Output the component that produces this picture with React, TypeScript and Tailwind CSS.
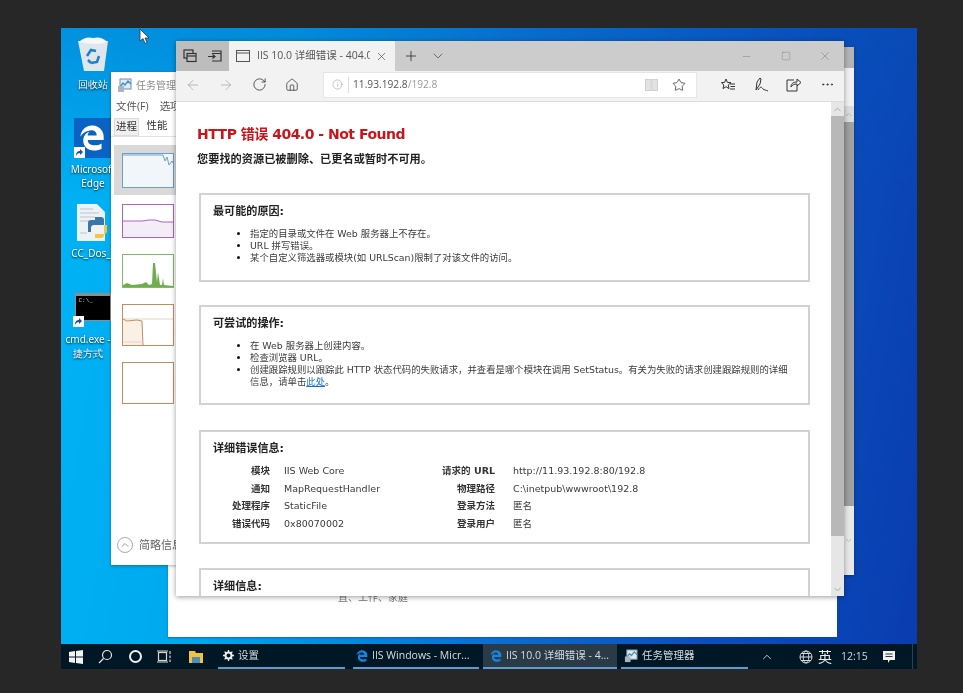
import React from 'react';
import { ArrowLeft, ArrowRight, RotateCw, Home, Info, Star, Plus, ChevronDown, ChevronUp, X, Minus, Square, MoreHorizontal } from 'lucide-react';
import { FaEdgeLegacy } from 'react-icons/fa6';

const cjk = { fontFamily: '"DejaVu Sans", "Noto Sans CJK SC", sans-serif' };
const ui = { fontFamily: '"Open Sans", "Noto Sans CJK SC", sans-serif' };

const DesktopLabel = ({ lines }: { lines: string[] }) => (
  <div className="text-center text-[10px] leading-[14px] text-white [text-shadow:0_1px_2px_rgba(0,0,0,0.9)] whitespace-nowrap">
    {lines.map(l => <div key={l}>{l}</div>)}
  </div>
);

const Shortcut = ({ className }: { className: string }) => (
  <div className={`absolute w-[11px] h-[11px] bg-white flex items-center justify-center ${className}`}>
    <svg width="9" height="9" viewBox="0 0 9 9"><path d="M1 8 C1 4 3 3 5 3 V1 L8 4 L5 7 V5 C3 5 2 6 1 8Z" fill="#1d4f9c" /></svg>
  </div>
);

const DesktopIcons = () => (
  <>
    <div className="absolute left-[12px] top-[8px] w-[40px] flex flex-col items-center gap-[5px]">
      <svg width="32" height="36" viewBox="0 0 32 36">
        <path d="M1 5 L31 5 L27 35 L7 35Z" fill="#dfe6ec" />
        <path d="M2 6 Q8 0 16 2 Q25 0 30 6 Q20 10 2 6Z" fill="#f5f7f9" />
        <path d="M10 20 L14 14 L19 15 M22 20 L20 26 L14 27 M11 24 L14 27" stroke="#1b7fd0" strokeWidth="2.5" fill="none" />
      </svg>
      <DesktopLabel lines={['回收站']} />
    </div>
    <div className="absolute left-[-4px] top-[90px] w-[72px] flex flex-col items-center">
      <div className="relative w-[37px] h-[40px] bg-[#0a63c4] flex items-center justify-center -ml-[2px]">
        <FaEdgeLegacy size={26} color="#ffffff" />
        <Shortcut className="bottom-0 left-0" />
      </div>
      <div className="mt-[4px]"><DesktopLabel lines={['Microsoft', 'Edge']} /></div>
    </div>
    <div className="absolute left-[14px] top-[175px] w-[40px]">
      <svg width="36" height="40" viewBox="0 0 36 40">
        <path d="M2 1 H22 L30 9 V38 H2Z" fill="#eef2f5" />
        <path d="M5 6 H18 M5 10 H24 M5 14 H20 M5 18 H14 M5 30 H12" stroke="#b9c5cf" strokeWidth="1" />
        <path d="M20 14 h6 a3 3 0 0 1 3 3 v5 h-10 a3 3 0 0 0 -3 3 v4 h-3 v-9 a3 3 0 0 1 3 -3 h4Z" fill="#3a76a8" />
        <path d="M29 22 h3 v6 a3 3 0 0 1 -3 3 h-9 v4 h6 a3 3 0 0 0 3 -3Z" fill="#f2c73f" />
      </svg>
      <div className="-ml-[8px] mt-[3px]"><DesktopLabel lines={['CC_Dos_']} /></div>
    </div>
    <div className="absolute left-[-9px] top-[265px] w-[72px] flex flex-col items-center">
      <div className="relative w-[36px] h-[28px] bg-black border border-t-[3px] border-[#8b8f93] ml-[9px] pl-[3px] text-[6px] leading-[10px] text-[#cfcfcf]" style={{ fontFamily: '"Liberation Mono", monospace' }}>
        C:\_
        <Shortcut className="bottom-[-7px] left-[-3px]" />
      </div>
      <div className="mt-[11px]"><DesktopLabel lines={['cmd.exe -', '捷方式']} /></div>
    </div>
  </>
);

const TaskManagerIcon = ({ size = 15 }: { size?: number }) => (
  <svg width={size} height={size} viewBox="0 0 15 15">
    <rect x="3" y="1" width="11" height="10" fill="#dfeaf3" stroke="#7b8d9c" />
    <path d="M3 9 L6 5 L8 7 L11 3 L14 6" stroke="#3d8fca" fill="none" strokeWidth="1.3" />
    <rect x="1" y="8" width="6" height="6" fill="#a9b4bd" />
  </svg>
);

const TaskManager = () => (
  <div className="absolute left-[50px] top-[44px] w-[90px] h-[493px] bg-white shadow-[0_1px_3px_rgba(0,0,0,0.3)] overflow-hidden whitespace-nowrap" style={ui}>
    <div className="h-[26px] flex items-center pl-[6px] gap-[4px] text-[10px] text-[#8a8a8a]">
      <TaskManagerIcon />
      <span>任务管理器</span>
    </div>
    <div className="h-[18px] flex items-center pl-[5px] gap-[11px] text-[10.5px] text-[#555]">
      <span>文件(F)</span><span>选项</span>
    </div>
    <div className="h-[21px] flex items-end border-b border-[#e2e2e2] pl-[3px] text-[10.5px] text-[#333]">
      <div className="w-[25px] h-[18px] bg-[#f0f0f0] border border-[#dcdcdc] flex items-center justify-center">进程</div>
      <div className="w-[36px] h-[20px] bg-white flex items-center justify-center">性能</div>
    </div>
    <div className="mt-[8px] ml-[3px] h-[50px] bg-[#d9d9d9] pt-[8px] pl-[8px]">
      <svg width="52" height="35" viewBox="0 0 52 35" className="block">
        <rect x="0.5" y="0.5" width="51" height="34" fill="#f1f6fb" stroke="#6ba0c7" />
        <path d="M1 2 H41 L43 8 L45 4 L47 12 L50 8 L51 10" stroke="#6ba0c7" fill="none" />
      </svg>
    </div>
    <div className="ml-[11px] mt-[9px] flex flex-col gap-[16px]">
      <svg width="52" height="34" viewBox="0 0 52 34" className="block">
        <rect x="0.5" y="0.5" width="51" height="33" fill="#fff" stroke="#ae63c2" />
        <path d="M1 17 H20 L27 16 H33 L40 18 H51 V33 H1Z" fill="#f3eef5" />
        <path d="M1 17 H20 L27 16 H33 L40 18 H51" stroke="#ae63c2" fill="none" />
      </svg>
      <svg width="52" height="34" viewBox="0 0 52 34" className="block">
        <rect x="0.5" y="0.5" width="51" height="33" fill="#fff" stroke="#82b866" />
        <path d="M1 31 L5 29 L10 31 L20 30 L24 28 L27 31 L30 30 L31 9 L33 9 L35 28 L36 18 L38 31 L40 31 L41 24 L42 31 L51 32 V33 H1Z" fill="#6fae4b" />
      </svg>
      <svg width="52" height="42" viewBox="0 0 52 42" className="block">
        <rect x="0.5" y="0.5" width="51" height="41" fill="#fff" stroke="#bf8f63" />
        <path d="M1 15 H51" stroke="#e7d3c2" />
        <path d="M1 15 L5 17 L15 16 L20 17 L21 41 H1Z" fill="#fbf0e6" />
        <path d="M1 15 L5 17 L15 16 L20 17 L21 41" stroke="#bf8f63" fill="none" />
        <path d="M1 38 H21" stroke="#e7d3c2" />
      </svg>
      <svg width="52" height="42" viewBox="0 0 52 42" className="block">
        <rect x="0.5" y="0.5" width="51" height="41" fill="#fff" stroke="#bf8f63" />
      </svg>
    </div>
    <div className="absolute left-[6px] bottom-[12px] flex items-center gap-[6px] text-[11px] text-[#666]">
      <div className="w-[16px] h-[16px] rounded-full border border-[#aaa] flex items-center justify-center text-[#999]">
        <ChevronUp size={12} />
      </div>
      <span>简略信息</span>
    </div>
  </div>
);

const TabIcons = () => (
  <div className="w-[53px] h-full flex items-center justify-around px-[2px] bg-[#bdbdbd] text-[#333]">
    <svg width="14" height="14" viewBox="0 0 14 14" fill="none" stroke="#333" strokeWidth="1.2">
      <rect x="1" y="1" width="9" height="8" /><rect x="4" y="4.5" width="9" height="8" fill="#bdbdbd" /><path d="M4 7 H13" />
    </svg>
    <svg width="15" height="12" viewBox="0 0 15 12" fill="none" stroke="#333" strokeWidth="1.2">
      <path d="M5 1 H14 V11 H5 M5 3.5 H14 M1 6.5 H8 M5.5 4.5 L8 6.5 L5.5 8.5" />
    </svg>
  </div>
);

const Toolbar = () => (
  <div className="h-[31px] shrink-0 bg-[#f2f2f2] border-b border-[#dcdcdc] flex items-center pb-[3px]">
    <div className="w-[147px] h-full flex items-center text-[#333]">
      <ArrowLeft size={16} strokeWidth={1.2} className="ml-[9px] text-[#aaa]" />
      <ArrowRight size={16} strokeWidth={1.2} className="ml-[17px] text-[#aaa]" />
      <RotateCw size={15} strokeWidth={1.3} className="ml-[18px]" />
      <Home size={14} strokeWidth={1.3} className="ml-[18px]" />
    </div>
    <div className="w-[374px] h-[26px] bg-white border border-[#e6e6e6] flex items-center text-[10.2px]" style={ui}>
      <Info size={11} strokeWidth={1.2} className="ml-[8px] text-[#999]" />
      <div className="w-px h-[16px] bg-[#ddd] ml-[5px] mr-[4px]" />
      <span className="text-[#555]">11.93.192.8</span><span className="text-[#9a9a9a]">/192.8</span>
      <svg width="13" height="12" viewBox="0 0 13 12" className="ml-auto" fill="#e3e3e3" stroke="#d0d0d0"><rect x="0.5" y="0.5" width="5.5" height="11" /><rect x="7" y="0.5" width="5.5" height="11" /></svg>
      <Star size={14} strokeWidth={1.3} className="ml-[14px] mr-[10px] text-[#333]" />
    </div>
    <div className="flex-1 flex items-center text-[#333]">
      <svg width="14" height="14" viewBox="0 0 14 14" fill="none" stroke="#333" className="ml-[24px]"><path d="M5 1 L6.4 4.4 L10 4.6 L7.2 7 L8 10.6 L5 8.7 L2 10.6 L2.8 7 L0.4 4.6 L3.6 4.4Z M9 6 H14 M9.5 8.5 H14 M9 11 H14" /></svg>
      <svg width="15" height="15" viewBox="0 0 15 15" fill="none" stroke="#333" className="ml-[19px]"><path d="M2 13 L3 5 L6 1 L7 2 L6 7 L2 13 M4 13 C7 8 8 11 9 12 C10 13 12 13 14 14" /></svg>
      <svg width="15" height="14" viewBox="0 0 15 14" fill="none" stroke="#333" className="ml-[17px]"><path d="M8 2 H1 V13 H11 V8 M5 9 C5 5 8 4 11 4 V1 L15 4.5 L11 8 V6 C8 6 6 7 5 9Z" /></svg>
      <MoreHorizontal size={15} strokeWidth={1.5} className="ml-[19px]" />
    </div>
  </div>
);

const Box = ({ title, className, children }: { title: string; className: string; children?: React.ReactNode }) => (
  <div className={`ml-[23px] mr-[21px] border-2 border-[#d2d2d2] pl-[12px] pt-[9px] ${className}`}>
    <div className="text-[11.1px] font-bold leading-[16px] text-[#222]">{title}</div>
    {children}
  </div>
);

const Bullets = ({ items }: { items: React.ReactNode[] }) => (
  <ul className="list-disc marker:text-[#111] ml-[37px] mt-[8px] text-[9.4px] leading-[12.1px] text-[#3a3a3a] whitespace-nowrap">
    {items.map((item, i) => <li key={i}>{item}</li>)}
  </ul>
);

const errorRows = [
  ['模块', 'IIS Web Core', '请求的 URL', 'http://11.93.192.8:80/192.8'],
  ['通知', 'MapRequestHandler', '物理路径', 'C:\\inetpub\\wwwroot\\192.8'],
  ['处理程序', 'StaticFile', '登录方法', '匿名'],
  ['错误代码', '0x80070002', '登录用户', '匿名'],
];

const PageBody = () => (
  <div className="flex-1 h-full overflow-hidden bg-white pt-[22px]" style={cjk}>
    <h1 className="ml-[21px] text-[14px] tracking-[-0.5px] leading-[20px] font-bold text-[#c8151b] whitespace-nowrap">HTTP 错误 404.0 - Not Found</h1>
    <p className="ml-[21px] mt-[9px] text-[11.2px] leading-[14px] font-bold text-[#222] whitespace-nowrap">您要找的资源已被删除、已更名或暂时不可用。</p>
    <Box title="最可能的原因:" className="mt-[26px] h-[89px]">
      <Bullets items={['指定的目录或文件在 Web 服务器上不存在。', 'URL 拼写错误。', '某个自定义筛选器或模块(如 URLScan)限制了对该文件的访问。']} />
    </Box>
    <Box title="可尝试的操作:" className="mt-[23px] h-[100px]">
      <Bullets items={[
        '在 Web 服务器上创建内容。',
        '检查浏览器 URL。',
        <>创建跟踪规则以跟踪此 HTTP 状态代码的失败请求，并查看是哪个模块在调用 SetStatus。有关为失败的请求创建跟踪规则的详细<br />信息，请单击<a className="text-[#1a6fd0] underline">此处</a>。</>,
      ]} />
    </Box>
    <Box title="详细错误信息:" className="mt-[25px] h-[114px]">
      <div className="mt-[5px] grid grid-cols-[57px_154px_71px_1fr] text-[9.5px] leading-[17.6px] text-[#3a3a3a] whitespace-nowrap">
        {errorRows.map(row => (
          <React.Fragment key={row[0]}>
            <div className="text-right font-bold text-[#333]">{row[0]}</div>
            <div className="pl-[14px]">{row[1]}</div>
            <div className="text-right font-bold text-[#333]">{row[2]}</div>
            <div className="pl-[18px]">{row[3]}</div>
          </React.Fragment>
        ))}
      </div>
    </Box>
    <Box title="详细信息:" className="mt-[24px] h-[60px]" />
  </div>
);

const Browser = () => (
  <div className="absolute left-[115px] top-[13px] w-[668px] h-[555px] flex flex-col bg-white shadow-[0_1px_5px_rgba(0,0,0,0.4)] overflow-hidden">
    <div className="h-[30px] shrink-0 bg-[#cccccc] flex items-center" style={ui}>
      <TabIcons />
      <div className="w-[166px] h-full bg-[#f2f2f2] flex items-center text-[10.5px] text-[#555] whitespace-nowrap">
        <svg width="14" height="12" viewBox="0 0 14 12" fill="none" stroke="#555" className="ml-[7px] shrink-0"><rect x="0.5" y="0.5" width="13" height="11" /><path d="M0.5 3 H13.5" /></svg>
        <span className="ml-[7px] w-[113px] overflow-hidden">IIS 10.0 详细错误 - 404.0</span>
        <X size={13} strokeWidth={1.2} className="ml-[5px] text-[#444] shrink-0" />
      </div>
      <Plus size={16} strokeWidth={1.3} className="ml-[8px] text-[#333]" />
      <ChevronDown size={16} strokeWidth={1.2} className="ml-[11px] text-[#555]" />
      <div className="ml-auto flex items-center text-[#858585]">
        <Minus size={11} strokeWidth={1.2} />
        <Square size={10} strokeWidth={1.2} className="ml-[29px]" />
        <X size={14} strokeWidth={1} className="ml-[27px] mr-[12px]" />
      </div>
    </div>
    <Toolbar />
    <div className="flex flex-1 min-h-0">
      <PageBody />
      <div className="w-[13px] h-full flex flex-col bg-[#e6e6e6] text-[#a5a5a5]">
        <div className="h-[14px] flex items-center justify-center"><ChevronUp size={11} /></div>
        <div className="h-[420px] bg-[#b8b8b8]" />
        <div className="mt-auto h-[14px] flex items-center justify-center"><ChevronDown size={11} /></div>
      </div>
    </div>
  </div>
);

const BackWindows = () => (
  <>
    <div className="absolute left-[107px] top-[500px] w-[669px] h-[109px] bg-white shadow-[0_1px_2px_rgba(0,80,160,0.6)]">
      <div className="mt-[64px] ml-[170px] text-[10px] leading-[10px] text-[#777]" style={ui}>直、工作、家庭</div>
    </div>
    <div className="absolute left-[770px] top-[19px] w-[23px] h-[528px] flex flex-col items-end bg-[#b3b3b3] shadow-[0_1px_3px_rgba(0,0,0,0.3)]">
      <div className="h-[21px]" />
      <div className="w-full h-[38px] bg-[#f0f0f0]" />
      <div className="w-full h-[16px] bg-[#dcdcdc] flex items-center justify-end pr-[1px] text-[#aaa]"><ChevronUp size={9} /></div>
      <div className="w-full h-[384px] bg-gradient-to-r from-[#8c8c8c] to-[#a3a3a3]" />
      <div className="w-full flex-1 bg-[#e8e8e8] flex items-center justify-end pr-[1px] text-[#aaa]"><ChevronDown size={9} /></div>
    </div>
  </>
);

const TaskItem = ({ icon, label, active, className }: { icon: React.ReactNode; label: string; active?: boolean; className: string }) => (
  <div className={`h-full border-b-2 border-[#5f9bd0] flex items-center gap-[4px] whitespace-nowrap ${active ? 'bg-[#2a3b47]' : ''} ${className}`}>
    {icon}
    <span className="text-[10.5px] text-[#d6dde2]">{label}</span>
  </div>
);

const EdgeGlyph = () => <FaEdgeLegacy size={12} color="#1685e4" className="shrink-0" />;

const Taskbar = () => (
  <div className="absolute left-0 right-0 bottom-0 h-[25px] bg-[#001825] flex items-center text-white" style={ui}>
    <svg width="14" height="14" viewBox="0 0 14 14" fill="#f2f2f2" className="ml-[8px]"><path d="M0 2 L6 1 V6.5 H0Z M7 1 L14 0 V6.5 H7Z M0 7.5 H6 V13 L0 12Z M7 7.5 H14 V14 L7 13Z" /></svg>
    <svg width="15" height="15" viewBox="0 0 15 15" fill="none" stroke="#e6e6e6" strokeWidth="1.2" className="ml-[15px]"><circle cx="9" cy="6" r="4.5" /><path d="M5.5 9.5 L1 14" /></svg>
    <div className="ml-[16px] w-[13px] h-[13px] rounded-full border-2 border-[#f0f0f0]" />
    <svg width="15" height="13" viewBox="0 0 15 13" fill="none" stroke="#d8d8d8" strokeWidth="1.2" className="ml-[15px]"><rect x="1.5" y="2.5" width="8" height="8" /><path d="M0 1 H11 M0 12 H11 M13 1 V4 M13 5.5 V8 M13 9.5 V12" /></svg>
    <svg width="14" height="12" viewBox="0 0 14 12" className="ml-[17px]"><path d="M0 0 H6 L7 2 H14 V12 H0Z" fill="#f3c23f" /><rect x="3" y="6" width="8" height="6" fill="#4e8fb4" /></svg>
    <div className="ml-[15px] w-[127px] h-full">
      <TaskItem className="pl-[5px]" label="设置" icon={
        <svg width="11" height="11" viewBox="0 0 11 11" fill="none" stroke="#eee" strokeWidth="2"><circle cx="5.5" cy="5.5" r="3" /><path d="M5.5 0 V2 M5.5 9 V11 M0 5.5 H2 M9 5.5 H11 M1.6 1.6 L3 3 M8 8 L9.4 9.4 M1.6 9.4 L3 8 M8 3 L9.4 1.6" strokeWidth="1.3" /></svg>
      } />
    </div>
    <div className="ml-[8px] w-[126px] h-full"><TaskItem className="pl-[3px]" label="IIS Windows - Micr..." icon={<EdgeGlyph />} /></div>
    <div className="ml-[4px] w-[134px] h-full"><TaskItem active className="pl-[7px]" label="IIS 10.0 详细错误 - 4..." icon={<EdgeGlyph />} /></div>
    <div className="ml-[4px] w-[127px] h-full"><TaskItem className="pl-[3px]" label="任务管理器" icon={<TaskManagerIcon size={14} />} /></div>
    <ChevronUp size={14} strokeWidth={1.5} className="ml-[12px] text-[#ddd]" />
    <svg width="14" height="14" viewBox="0 0 14 14" fill="none" stroke="#d8d8d8" className="ml-[25px]"><circle cx="7" cy="7" r="6" /><ellipse cx="7" cy="7" rx="2.8" ry="6" /><path d="M1 7 H13 M2 3.5 H12 M2 10.5 H12" /></svg>
    <span className="ml-[5px] text-[14px] text-[#eee]">英</span>
    <span className="ml-[9px] text-[10.5px] text-[#cfd6db]">12:15</span>
    <svg width="14" height="14" viewBox="0 0 14 14" className="ml-[14px]"><path d="M1 1 H13 V10 H8 L6 13 V10 H1Z" fill="#f0f0f0" /><path d="M3.5 4 H10.5 M3.5 6.5 H10.5" stroke="#333" /></svg>
    <div className="ml-auto mr-[4px] w-px h-full bg-[#33404a]" />
  </div>
);

const Cursor = () => (
  <svg width="11" height="17" viewBox="0 0 11 17" className="absolute left-[78px] top-[0px]">
    <path d="M1 1 V13 L4 10.5 L6 15.5 L8 14.5 L6 10 H10Z" fill="#fff" stroke="#333" strokeWidth="0.8" />
  </svg>
);

export default function App() {
  return (
    <div className="w-[963px] h-[693px] overflow-hidden bg-[#272727] pt-[28px] pl-[61px] blur-[0.6px]">
      <div className="relative w-[856px] h-[641px] overflow-hidden bg-[linear-gradient(to_bottom,rgba(5,80,180,0.35),transparent_28%),linear-gradient(100deg,#00b4f5_0%,#00a8ee_25%,#0a78d8_50%,#0a52c0_75%,#0a3cae_100%)]">
        <DesktopIcons />
        <BackWindows />
        <TaskManager />
        <Browser />
        <Taskbar />
        <Cursor />
      </div>
    </div>
  );
}
